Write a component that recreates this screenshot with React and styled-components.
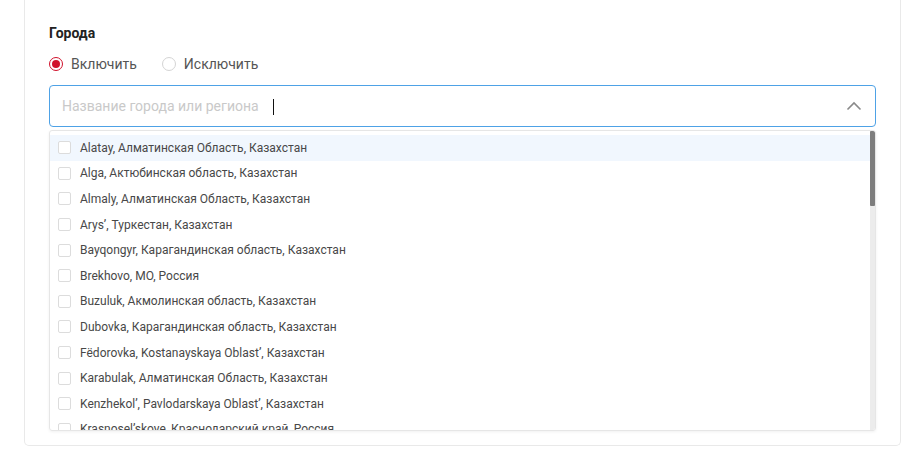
import React from "react";
import styled, { createGlobalStyle } from "styled-components";

const Global = createGlobalStyle`
  html, body { margin: 0; padding: 0; background: #fff; }
  body { font-family: Roboto, "Noto Sans", Arial, sans-serif; }
`;

const Page = styled.div`
  padding: 0 7px 19px 24px;
  width: 908px;
  box-sizing: border-box;
`;

const Card = styled.section`
  border: 1px solid #e9e9e9;
  border-top: none;
  border-radius: 0 0 5px 5px;
  padding: 23px 24px 14px 24px;
  background: #fff;
`;

const Title = styled.h3`
  margin: 0;
  font-size: 14px;
  line-height: 20px;
  font-weight: 700;
  color: #222;
`;

const RadioRow = styled.div`
  display: flex;
  align-items: center;
  gap: 25px;
  margin-top: 11px;
  height: 20px;
`;

const RadioLabel = styled.label`
  display: flex;
  align-items: center;
  gap: 8px;
  font-size: 14px;
  color: #555;
`;

const RadioCircle = styled.span`
  width: 14px;
  height: 14px;
  box-sizing: border-box;
  border-radius: 50%;
  border: 1px solid ${(p) => (p.$checked ? "#d0112b" : "#d4d4d4")};
  display: flex;
  align-items: center;
  justify-content: center;
  &::after {
    content: "";
    width: 8px;
    height: 8px;
    border-radius: 50%;
    background: ${(p) => (p.$checked ? "#d0112b" : "transparent")};
  }
`;

const Field = styled.div`
  margin-top: 11px;
  height: 42px;
  box-sizing: border-box;
  border: 1px solid #4ea2e6;
  border-radius: 4px;
  display: flex;
  align-items: center;
  padding: 0 12px 0 12px;
`;

const Placeholder = styled.span`
  font-size: 14px;
  color: #c9c9c9;
`;

const Caret = styled.span`
  width: 1px;
  height: 16px;
  background: #111;
  margin-left: 14px;
  margin-top: 2px;
`;

const Chevron = styled.svg`
  margin-left: auto;
  margin-right: 1px;
`;

const Dropdown = styled.div`
  position: relative;
  margin-top: 3px;
  height: 301px;
  border: 1px solid #e6e6e6;
  border-radius: 3px;
  box-shadow: 0 1px 3px rgba(0, 0, 0, 0.06);
  overflow: hidden;
  padding-top: 4px;
  box-sizing: border-box;
`;

const Option = styled.div`
  height: 25.6px;
  display: flex;
  align-items: center;
  padding-left: 8px;
  gap: 9px;
  background: ${(p) => (p.$active ? "#f1f7fe" : "transparent")};
  font-size: 12px;
  color: #484848;
  white-space: nowrap;
`;

const Box = styled.span`
  width: 13px;
  height: 13px;
  box-sizing: border-box;
  border: 1px solid #dcdcdc;
  border-radius: 2px;
  background: #fff;
  flex: none;
`;

const Track = styled.div`
  position: absolute;
  top: 0;
  right: 0;
  bottom: 0;
  width: 5px;
  background: #ececec;
`;

const Thumb = styled.div`
  height: 75px;
  background: #7d7d7d;
  border-radius: 1px;
`;

const cities = [
  "Alatay, Алматинская Область, Казахстан",
  "Alga, Актюбинская область, Казахстан",
  "Almaly, Алматинская Область, Казахстан",
  "Arys’, Туркестан, Казахстан",
  "Bayqongyr, Карагандинская область, Казахстан",
  "Brekhovo, МО, Россия",
  "Buzuluk, Акмолинская область, Казахстан",
  "Dubovka, Карагандинская область, Казахстан",
  "Fëdorovka, Kostanayskaya Oblast’, Казахстан",
  "Karabulak, Алматинская Область, Казахстан",
  "Kenzhekol’, Pavlodarskaya Oblast’, Казахстан",
  "Krasnosel’skoye, Краснодарский край, Россия",
];

export default function App() {
  return (
    <Page>
      <Global />
      <Card>
        <Title>Города</Title>
        <RadioRow>
          <RadioLabel>
            <RadioCircle $checked />
            Включить
          </RadioLabel>
          <RadioLabel>
            <RadioCircle />
            Исключить
          </RadioLabel>
        </RadioRow>
        <Field>
          <Placeholder>Название города или региона</Placeholder>
          <Caret />
          <Chevron width="16" height="10" viewBox="0 0 16 10">
            <path d="M1.5 8.5 L8 2 L14.5 8.5" fill="none" stroke="#8a8a8a" strokeWidth="1.6" />
          </Chevron>
        </Field>
        <Dropdown>
          {cities.map((c, i) => (
            <Option key={c} $active={i === 0}>
              <Box />
              {c}
            </Option>
          ))}
          <Track>
            <Thumb />
          </Track>
        </Dropdown>
      </Card>
    </Page>
  );
}
